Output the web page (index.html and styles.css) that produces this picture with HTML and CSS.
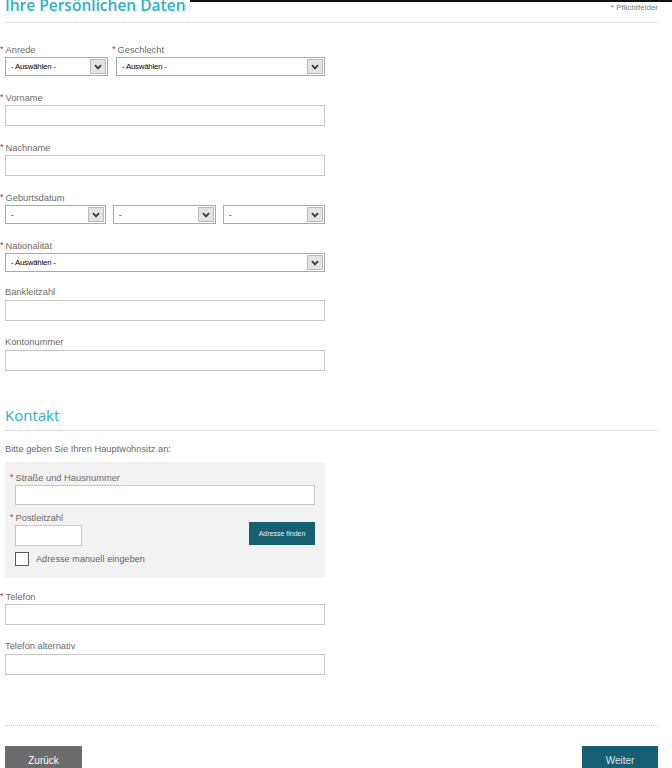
FILE: index.html
```html
<!DOCTYPE html>
<html lang="de">
<head>
<meta charset="utf-8">
<title>Ihre Persönlichen Daten</title>
<link rel="stylesheet" href="styles.css">
</head>
<body>
<div class="topline"></div>
<main class="page">
  <header class="section-head">
    <h1 class="title">Ihre Persönlichen Daten</h1>
    <span class="req-note">* Pflichtfelder</span>
  </header>

  <div class="form-col">
    <div class="group row-2">
      <div class="col-a">
        <label class="lbl"><span class="star">*</span>Anrede</label>
        <div class="select"><span class="sel-val">- Auswählen -</span><span class="sel-btn"><svg width="8" height="6" viewBox="0 0 8 6"><path d="M1 1.2 L4 4.4 L7 1.2" fill="none" stroke="#3a3a3a" stroke-width="1.8"/></svg></span></div>
      </div>
      <div class="col-b">
        <label class="lbl"><span class="star">*</span>Geschlecht</label>
        <div class="select"><span class="sel-val">- Auswählen -</span><span class="sel-btn"><svg width="8" height="6" viewBox="0 0 8 6"><path d="M1 1.2 L4 4.4 L7 1.2" fill="none" stroke="#3a3a3a" stroke-width="1.8"/></svg></span></div>
      </div>
    </div>

    <div class="group">
      <label class="lbl"><span class="star">*</span>Vorname</label>
      <div class="input"></div>
    </div>

    <div class="group">
      <label class="lbl"><span class="star">*</span>Nachname</label>
      <div class="input"></div>
    </div>

    <div class="group">
      <label class="lbl"><span class="star">*</span>Geburtsdatum</label>
      <div class="row-3">
        <div class="select"><span class="sel-val">-</span><span class="sel-btn"><svg width="8" height="6" viewBox="0 0 8 6"><path d="M1 1.2 L4 4.4 L7 1.2" fill="none" stroke="#3a3a3a" stroke-width="1.8"/></svg></span></div>
        <div class="select"><span class="sel-val">-</span><span class="sel-btn"><svg width="8" height="6" viewBox="0 0 8 6"><path d="M1 1.2 L4 4.4 L7 1.2" fill="none" stroke="#3a3a3a" stroke-width="1.8"/></svg></span></div>
        <div class="select"><span class="sel-val">-</span><span class="sel-btn"><svg width="8" height="6" viewBox="0 0 8 6"><path d="M1 1.2 L4 4.4 L7 1.2" fill="none" stroke="#3a3a3a" stroke-width="1.8"/></svg></span></div>
      </div>
    </div>

    <div class="group group-nat">
      <label class="lbl"><span class="star">*</span>Nationalität</label>
      <div class="select"><span class="sel-val">- Auswählen -</span><span class="sel-btn"><svg width="8" height="6" viewBox="0 0 8 6"><path d="M1 1.2 L4 4.4 L7 1.2" fill="none" stroke="#3a3a3a" stroke-width="1.8"/></svg></span></div>
    </div>

    <div class="group">
      <label class="lbl">Bankleitzahl</label>
      <div class="input"></div>
    </div>

    <div class="group">
      <label class="lbl">Kontonummer</label>
      <div class="input"></div>
    </div>
  </div>

  <header class="section-head sub">
    <h2 class="subtitle">Kontakt</h2>
  </header>

  <p class="hint">Bitte geben Sie Ihren Hauptwohnsitz an:</p>

  <div class="address-box">
    <label class="lbl"><span class="star">*</span>Straße und Hausnummer</label>
    <div class="input input-street"></div>
    <div class="plz-row">
      <div class="plz-col">
        <label class="lbl"><span class="star">*</span>Postleitzahl</label>
        <div class="input input-plz"></div>
      </div>
      <button class="btn-find" type="button">Adresse finden</button>
    </div>
    <div class="check-row">
      <span class="checkbox"></span>
      <span class="check-lbl">Adresse manuell eingeben</span>
    </div>
  </div>

  <div class="form-col phone">
    <div class="group">
      <label class="lbl"><span class="star">*</span>Telefon</label>
      <div class="input"></div>
    </div>
    <div class="group">
      <label class="lbl">Telefon alternativ</label>
      <div class="input"></div>
    </div>
  </div>

  <div class="footer-line"></div>

  <div class="nav-row">
    <button class="btn-back" type="button">Zurück</button>
    <button class="btn-next" type="button">Weiter</button>
  </div>
</main>
</body>
</html>
```

FILE: styles.css
```css
* { box-sizing: border-box; }
html, body { margin: 0; padding: 0; background: #fff; overflow: hidden; }
body { font-family: "Liberation Sans", Arial, sans-serif; color: #666; }

.topline {
  height: 2px;
  margin-left: 190px;
  background: #111;
}

.page {
  padding: 0 14px 0 5px;
}

.section-head {
  display: flex;
  justify-content: space-between;
  align-items: flex-start;
  margin-top: -7px;
  padding-bottom: 7px;
  border-bottom: 1px dotted #c8c8c8;
}

.title {
  margin: 0;
  font-family: "Open Sans", sans-serif;
  font-weight: 600;
  font-size: 15.5px;
  line-height: 20px;
  color: #2db2c6;
}

.req-note {
  font-size: 8px;
  color: #777;
  padding-top: 8px;
}

.form-col { width: 320px; }
.form-col:first-of-type { margin-top: 20px; }

.group { margin-bottom: 15px; }
.group-nat { margin-bottom: 14px; }

.lbl {
  display: block;
  font-size: 9.3px;
  line-height: 12px;
  height: 12px;
  margin-bottom: 2px;
  color: #6a6a6a;
}
.star {
  color: #d0202a;
  margin-left: -5px;
  margin-right: 2px;
  font-size: 9px;
  vertical-align: 1px;
}

.row-2 { display: flex; gap: 8px; }
.col-a { width: 103px; }
.col-b { flex: 1; }
.col-b .lbl { margin-left: 1px; }

.row-3 {
  display: grid;
  grid-template-columns: 101px 103px 102px;
  gap: 8px 7px;
}

.select {
  display: flex;
  height: 19px;
  border: 1px solid #a9a9a9;
  background: #fff;
}
.sel-val {
  flex: 1;
  font-size: 7.8px;
  line-height: 17px;
  padding-left: 5px;
  color: #000;
  letter-spacing: -0.2px;
}
.sel-btn {
  width: 16px;
  margin: 1px;
  background: #e4e4e4;
  border: 1px solid #b9b9b9;
  display: flex;
  align-items: center;
  justify-content: center;
}

.input {
  height: 21px;
  border: 1px solid #c6c6c6;
  background: #fff;
}

.section-head.sub {
  margin-top: 34px;
  padding-bottom: 5px;
  align-items: center;
}
.subtitle {
  margin: 0;
  font-family: "Open Sans", sans-serif;
  font-weight: 400;
  font-size: 15px;
  line-height: 20px;
  color: #2db2c6;
}

.hint {
  margin: 12px 0 0;
  font-size: 9.3px;
  line-height: 12px;
  color: #6a6a6a;
}

.address-box {
  margin-top: 7px;
  width: 320px;
  height: 116px;
  background: #f2f2f2;
  padding: 9px 10px 0 10px;
}
.input-street { height: 20px; margin-bottom: 6px; }
.plz-row {
  display: flex;
  justify-content: space-between;
  align-items: flex-end;
}
.input-plz { width: 67px; }
.btn-find {
  width: 66px;
  height: 23px;
  margin-bottom: 1px;
  border: 0;
  padding: 0;
  background: #165e72;
  color: #e8f2f4;
  font-family: "Liberation Sans", Arial, sans-serif;
  font-size: 7px;
}

.check-row {
  display: flex;
  align-items: center;
  gap: 7px;
  margin-top: 6px;
}
.checkbox {
  width: 14px;
  height: 14px;
  border: 1px solid #5a5a5a;
  background: #fff;
}
.check-lbl {
  font-size: 9px;
  color: #5e5e5e;
  letter-spacing: 0.1px;
}

.form-col.phone { margin-top: 12px; }

.footer-line {
  margin-top: 50px;
  border-bottom: 1px dotted #c8c8c8;
}

.nav-row {
  display: flex;
  justify-content: space-between;
  margin-top: 20px;
}
.btn-back, .btn-next {
  height: 30px;
  border: 0;
  padding: 0;
  color: #fff;
  font-family: "Liberation Sans", Arial, sans-serif;
  font-size: 10px;
  line-height: 28px;
  text-align: center;
}
.btn-back { width: 77px; background: #6b6b6b; }
.btn-next { width: 76px; background: #165e72; color: #d6e8ec; }
```
